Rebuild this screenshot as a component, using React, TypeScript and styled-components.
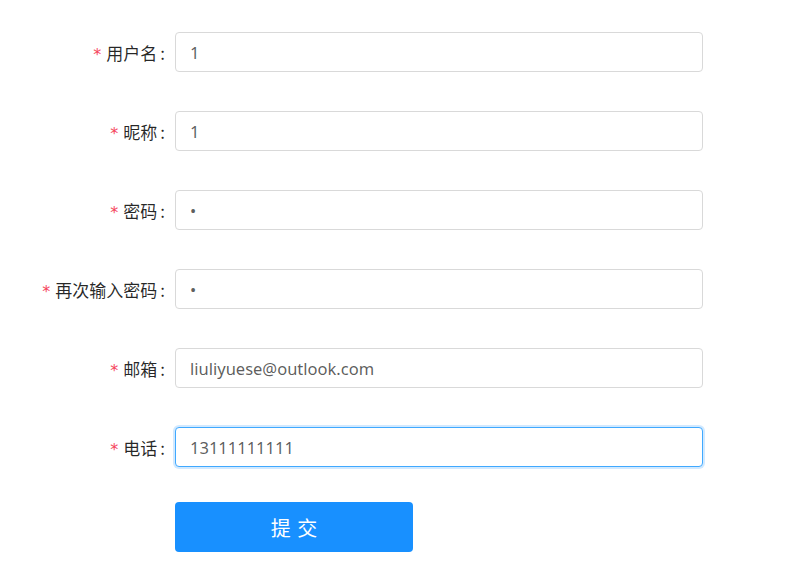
import React from "react";
import styled, { createGlobalStyle } from "styled-components";

const Global = createGlobalStyle`
  html, body { margin: 0; padding: 0; background: #fff; }
  body { font-family: "Noto Sans", "Noto Sans CJK SC", sans-serif; }
`;

const Form = styled.form`
  display: flex;
  flex-direction: column;
  padding-top: 32px;
  gap: 39px;
`;

const Row = styled.div`
  display: flex;
  align-items: center;
  height: 40px;
`;

const Label = styled.label`
  width: 167px;
  padding-right: 8px;
  display: flex;
  justify-content: flex-end;
  align-items: center;
  font-size: 17px;
  color: rgba(0, 0, 0, 0.85);
  white-space: nowrap;
  font-family: "Noto Sans CJK SC", sans-serif;
`;

const Star = styled.span`
  color: #f5455c;
  font-size: 16px;
  line-height: 1;
  margin-right: 5px;
  font-weight: 400;
  font-family: "DejaVu Sans", sans-serif;
  transform: translateY(3px);
`;

const Colon = styled.span`
  margin-left: 3px;
  margin-right: 2px;
`;

const Input = styled.input<{ $focused?: boolean }>`
  box-sizing: border-box;
  width: 528px;
  height: 40px;
  padding: 0 14px;
  border: 1px solid ${(p) => (p.$focused ? "#40a9ff" : "#d9d9d9")};
  border-radius: 4px;
  font-size: 16.5px;
  color: rgba(0, 0, 0, 0.65);
  font-family: "Noto Sans", "Noto Sans CJK SC", sans-serif;
  outline: none;
  box-shadow: ${(p) => (p.$focused ? "0 0 0 2px rgba(24, 144, 255, 0.2)" : "none")};
  background: #fff;
`;

const ButtonRow = styled.div`
  display: flex;
  padding-left: 175px;
  margin-top: -4px;
`;

const Submit = styled.button`
  width: 238px;
  height: 50px;
  border: none;
  border-radius: 4px;
  background: #1890ff;
  color: #fff;
  font-size: 20px;
  word-spacing: 2px;
  font-family: "Noto Sans CJK SC", sans-serif;
  cursor: pointer;
`;

const fields: { label: string; value: string; type?: string; focused?: boolean }[] = [
  { label: "用户名", value: "1" },
  { label: "昵称", value: "1" },
  { label: "密码", value: "1", type: "password" },
  { label: "再次输入密码", value: "1", type: "password" },
  { label: "邮箱", value: "liuliyuese@outlook.com" },
  { label: "电话", value: "13111111111", focused: true },
];

export default function App() {
  return (
    <>
      <Global />
      <Form onSubmit={(e) => e.preventDefault()}>
        {fields.map((f) => (
          <Row key={f.label}>
            <Label>
              <Star>*</Star>
              {f.label}
              <Colon>:</Colon>
            </Label>
            <Input
              type={f.type ?? "text"}
              defaultValue={f.value}
              $focused={f.focused}
            />
          </Row>
        ))}
        <ButtonRow>
          <Submit type="submit">提 交</Submit>
        </ButtonRow>
      </Form>
    </>
  );
}
